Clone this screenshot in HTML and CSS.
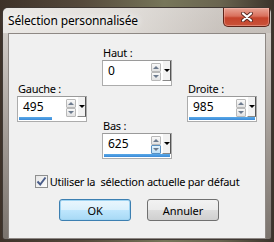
FILE: index.html
```html
<!DOCTYPE html>
<html lang="fr">
<head>
  <meta charset="UTF-8">
  <title>Sélection personnalisée</title>
  <link rel="stylesheet" href="styles.css">
</head>
<body>
  <div class="fenetre">
    <div class="titre">
      <span class="titre-texte">Sélection personnalisée</span>
      <button class="fermer" aria-label="Fermer">
        <svg width="12" height="10" viewBox="0 0 12 10">
          <path d="M2 1.5 L10 8.5 M10 1.5 L2 8.5" stroke="#5a2a22" stroke-width="4" stroke-linecap="round"/>
          <path d="M2 1.5 L10 8.5 M10 1.5 L2 8.5" stroke="#ffffff" stroke-width="2.2" stroke-linecap="round"/>
        </svg>
      </button>
    </div>

    <div class="client">
      <div class="croix">
        <div class="col col-cote">
          <label>Gauche :</label>
          <div class="spin">
            <div class="spin-ligne">
              <span class="valeur">495</span>
              <span class="fleches"><span class="fl fl-haut"></span><span class="fl fl-bas"></span></span>
              <span class="deroule"></span>
            </div>
            <div class="barre"><span style="width:50%"></span></div>
          </div>
        </div>

        <div class="col">
          <label>Haut :</label>
          <div class="spin">
            <div class="spin-ligne">
              <span class="valeur">0</span>
              <span class="fleches"><span class="fl fl-haut"></span><span class="fl fl-bas"></span></span>
              <span class="deroule"></span>
            </div>
            <div class="barre"><span style="width:0%"></span></div>
          </div>

          <label class="lbl-bas">Bas :</label>
          <div class="spin">
            <div class="spin-ligne">
              <span class="valeur">625</span>
              <span class="fleches"><span class="fl fl-haut"></span><span class="fl fl-bas actif"></span></span>
              <span class="deroule"></span>
            </div>
            <div class="barre"><span style="width:100%"></span></div>
          </div>
        </div>

        <div class="col col-cote">
          <label>Droite :</label>
          <div class="spin">
            <div class="spin-ligne">
              <span class="valeur">985</span>
              <span class="fleches"><span class="fl fl-haut"></span><span class="fl fl-bas"></span></span>
              <span class="deroule"></span>
            </div>
            <div class="barre"><span style="width:100%"></span></div>
          </div>
        </div>
      </div>

      <label class="case">
        <span class="coche">
          <svg width="11" height="11" viewBox="0 0 11 11">
            <path d="M1.5 5.5 L4.2 8.5 L9.5 1.5" fill="none" stroke="#4a5d8a" stroke-width="2"/>
          </svg>
        </span>
        <span>Utiliser la&nbsp; sélection actuelle par défaut</span>
      </label>

      <div class="boutons">
        <button class="btn defaut">OK</button>
        <button class="btn">Annuler</button>
      </div>
    </div>
  </div>
</body>
</html>
```

FILE: styles.css
```css
* {
  box-sizing: border-box;
}
html, body {
  margin: 0;
}
body {
  width: 274px;
  height: 242px;
  overflow: hidden;
  padding: 7px 2px 0;
  background: linear-gradient(90deg, #3e3229 0%, #55493b 30%, #77765a 60%, #6a6550 80%, #3c332b 100%);
  font-family: "Noto Sans", sans-serif;
  font-size: 11px;
  letter-spacing: -0.25px;
  color: #000;
}
.fenetre {
  width: 270px;
  height: 233px;
  border: 1px solid #3f3833;
  border-radius: 6px 6px 3px 3px;
  background: linear-gradient(180deg, #d9d5d1 0%, #c8c2bd 20%, #a39c96 55%, #7a736d 100%);
  display: flex;
  flex-direction: column;
}
.titre {
  height: 25px;
  display: flex;
  justify-content: space-between;
  padding-left: 5px;
  border-radius: 5px 5px 0 0;
  background: linear-gradient(90deg, rgba(238,236,233,.9) 0%, rgba(230,227,223,.7) 45%, rgba(190,183,176,.4) 80%, rgba(170,162,154,.3) 100%);
}
.titre-texte {
  margin-top: 6px;
  font-size: 12px;
  letter-spacing: -0.15px;
  line-height: 14px;
  text-shadow: 0 0 6px #fff, 0 0 10px #fff;
}
.fermer {
  width: 47px;
  height: 19px;
  margin-right: 1px;
  padding: 0;
  border: 1px solid #5e2419;
  border-top: none;
  border-radius: 0 0 5px 5px;
  background: linear-gradient(180deg, #e9a596 0%, #d9705c 45%, #c5432b 55%, #c9533a 100%);
  box-shadow: inset 0 0 0 1px rgba(255,200,190,.4);
  display: flex;
  align-items: center;
  justify-content: center;
}
.client {
  flex: 1;
  margin: 0 5px;
  background: #f0f0f0;
  border: 1px solid #8e8884;
  padding-top: 12px;
}
.croix {
  display: flex;
  justify-content: center;
  gap: 15px;
}
.col {
  width: 70px;
  display: flex;
  flex-direction: column;
}
.col-cote {
  padding-top: 36px;
}
label {
  display: block;
  line-height: 13px;
  margin: 0 0 1px 1px;
}
.lbl-bas {
  margin-top: 33px;
}
.spin {
  height: 26px;
  background: #fff;
  border: 1px solid #acacac;
  border-top-color: #9a9a9a;
}
.spin-ligne {
  height: 20px;
  display: flex;
}
.valeur {
  flex: 1;
  padding-left: 5px;
  line-height: 20px;
  font-size: 12px;
  letter-spacing: 0;
}
.fleches {
  width: 10px;
  padding-top: 2px;
  margin-right: 1px;
  display: flex;
  flex-direction: column;
}
.fl {
  height: 9px;
  border: 1px solid #b9b9b9;
  border-radius: 1px;
  background: linear-gradient(180deg, #f9f9f9, #e2e2e2);
  display: flex;
  align-items: center;
  justify-content: center;
}
.fl::after {
  content: "";
  border-left: 3px solid transparent;
  border-right: 3px solid transparent;
}
.fl-haut::after {
  border-bottom: 3px solid #6d7b8e;
}
.fl-bas::after {
  border-top: 3px solid #6d7b8e;
}
.fl.actif {
  border-color: #5a91c2;
  background: linear-gradient(180deg, #e3f3fc, #bfe0f6);
}
.deroule {
  width: 9px;
  background: #f2f2f2;
  border-left: 1px solid #fff;
  border-right: 1px solid #555;
  border-bottom: 1px solid #888;
  display: flex;
  align-items: center;
  justify-content: center;
}
.deroule::after {
  content: "";
  border-left: 3px solid transparent;
  border-right: 3px solid transparent;
  border-top: 3px solid #000;
}
.barre {
  height: 3px;
  margin: 0 1px;
}
.barre span {
  display: block;
  height: 100%;
  background: linear-gradient(180deg, #5aa9e8, #3a8ad8);
}
.case {
  margin: 16px 0 0;
  display: flex;
  justify-content: center;
  align-items: center;
  gap: 2px;
  line-height: 13px;
}
.coche {
  width: 13px;
  height: 13px;
  border: 1px solid #8e8f8f;
  background: linear-gradient(135deg, #e6e6e6, #fdfdfd);
  display: flex;
  align-items: center;
  justify-content: center;
}
.boutons {
  margin-top: 11px;
  padding-left: 4px;
  display: flex;
  justify-content: center;
  gap: 16px;
}
.btn {
  width: 72px;
  height: 22px;
  padding: 0;
  border: 1px solid #707070;
  border-radius: 3px;
  background: linear-gradient(180deg, #f2f2f2 0%, #ebebeb 50%, #dddddd 51%, #cfcfcf 100%);
  font-family: "Noto Sans", sans-serif;
  font-size: 11px;
  letter-spacing: -0.1px;
  color: #000;
}
.defaut {
  border-color: #3c7fb1;
  background: linear-gradient(180deg, #eaf6fd 0%, #d9f0fc 50%, #bee6fd 51%, #a7d9f5 100%);
  box-shadow: inset 0 0 0 1px #9fd4f2;
}
```
